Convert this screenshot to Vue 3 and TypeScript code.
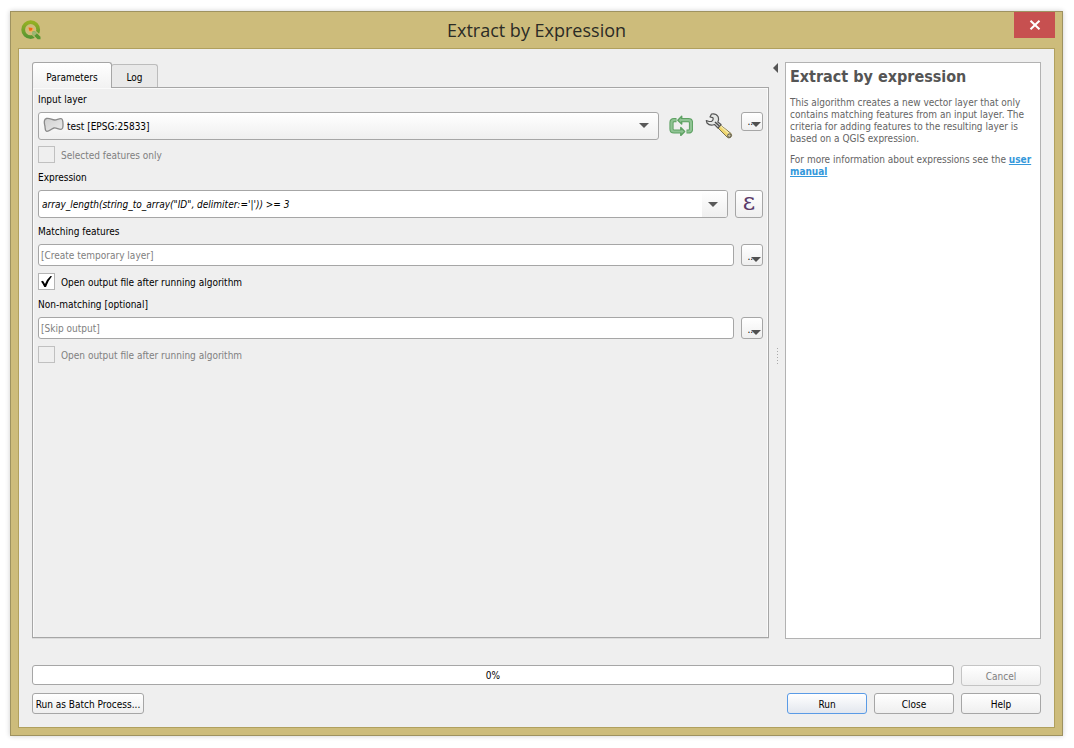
<script setup lang="ts">
import { ref } from 'vue'

const layer = ref('test [EPSG:25833]')
const selectedOnly = ref(false)
const expression = ref(`array_length(string_to_array("ID", delimiter:='|')) >= 3`)
const progress = ref(0)

interface Output {
  id: string
  label: string
  hint: string
  open: boolean
  disabled: boolean
}

const outputs = ref<Output[]>([
  { id: 'matching', label: 'Matching features', hint: '[Create temporary layer]', open: true, disabled: false },
  { id: 'failing', label: 'Non-matching [optional]', hint: '[Skip output]', open: false, disabled: true },
])
</script>

<template>
  <div class="window">
    <header class="titlebar">
      <svg class="logo" viewBox="0 0 20 20" aria-hidden="true">
        <defs>
          <linearGradient id="ring" x1="0" y1="0" x2="0" y2="1">
            <stop offset="0" stop-color="#93b023" />
            <stop offset="1" stop-color="#589632" />
          </linearGradient>
        </defs>
        <circle cx="9.700" cy="9.700" r="7.500" fill="none" stroke="url(#ring)" stroke-width="3.800" />
        <path d="M9.500 13.500L13.500 9.500L19.800 15.500V19.800H15.500Z" fill="#cdbc7b" />
        <path d="M11 11.500L13.500 11L19.500 16.700V19.200H16.700L11 13.700Z" fill="#589632" />
        <path d="M11 11.500L13.500 11L16 13.400L13.300 15.900L11 13.700Z" fill="#9cb873" />
        <path d="M7.500 7.500L12.300 8L12.600 10.500L10.800 12L8 11.500Z" fill="#f3b05a" />
        <path d="M7.500 7.500L11.500 7.900L11 10.300L8.500 11Z" fill="#ee6913" />
      </svg>
      <h1>Extract by Expression</h1>
      <button class="close" type="button" aria-label="Close window">
        <svg viewBox="0 0 12 10" aria-hidden="true">
          <path d="M1.500 .7L10.500 9.300M10.500 .7L1.500 9.300" stroke="#fff" stroke-width="2" />
        </svg>
      </button>
    </header>

    <main class="client">
      <div class="columns">
        <section class="left">
          <div class="tabs" role="tablist">
            <button class="tab active" type="button" role="tab" aria-selected="true">Parameters</button>
            <button class="tab" type="button" role="tab" aria-selected="false">Log</button>
          </div>
          <div class="panel" role="tabpanel">
            <label class="caption" for="layer">Input layer</label>
            <div class="row layer-row">
              <div class="layer-box">
                <select id="layer" v-model="layer">
                  <option>test [EPSG:25833]</option>
                </select>
                <svg class="polygon" viewBox="0 0 21 16" aria-hidden="true">
                  <defs>
                    <linearGradient id="poly" x1="0" y1="0" x2="1" y2="1">
                      <stop offset="0" stop-color="#cfcfcf" />
                      <stop offset="1" stop-color="#ececec" />
                    </linearGradient>
                  </defs>
                  <path d="M3.500 1.500C7 .8 9 3.200 12 3C14 2.800 16 1.500 18 1.700C20 2 20 4.500 20 7C20 10 20.300 11.500 18.500 12.200C16 12.800 13.500 10.500 11 11C8 11.800 6.500 14.500 3.800 14.300C1.500 14 2.500 10.500 1.700 8C1 5 1 2 3.500 1.500Z" fill="url(#poly)" stroke="#8a8a8a" stroke-width="1.300" />
                </svg>
                <svg class="arrow" viewBox="0 0 10 5" aria-hidden="true"><path d="M0 0H10L5 5Z" /></svg>
              </div>
              <button class="tool" type="button" aria-label="Iterate over this layer">
                <svg class="iterate" viewBox="0 0 24 22" aria-hidden="true">
                  <g fill="none" stroke-linejoin="round">
                    <path d="M7.500 5.200H5Q2.500 5.200 2.500 7.700V14Q2.500 16.500 5 16.500H12M12 5.200H19.500Q22 5.200 22 7.700V14Q22 16.500 19.500 16.500H17.500" stroke="#5da162" stroke-width="4.200" />
                    <path d="M8.800 5.200L12.700 1.300V9.100ZM15.700 16.500L11.800 12.600V20.400Z" fill="#8fc393" stroke="#5da162" stroke-width="1.400" />
                    <path d="M6.800 5.200H5Q2.500 5.200 2.500 7.700V14Q2.500 16.500 5 16.500H13M11.500 5.200H19.500Q22 5.200 22 7.700V14Q22 16.500 19.500 16.500H18.200" stroke="#8fc393" stroke-width="2.200" />
                  </g>
                </svg>
              </button>
              <button class="tool" type="button" aria-label="Advanced options">
                <svg class="wrench" viewBox="0 0 28 26" aria-hidden="true">
                  <path d="M13.500 10.500L26 20.500Q27.500 22.500 25.500 24.500Q23.500 25.500 22 24L11.500 13.500Z" fill="#efd66f" stroke="#77704e" />
                  <path d="M15 12.500L24 20.500" stroke="#f8eaa6" stroke-width="1.500" />
                  <circle cx="24.300" cy="22.600" r="1.700" fill="#d0c8a0" stroke="#555" />
                  <path d="M6.500 1Q11 .2 13 3.500Q14.200 6.500 12.800 9L16 11.500L13 15L9.500 11.500Q5 13.500 2 10L1.300 7.600L3.600 8.300L6.500 8.500Q9 7 7.800 4.600L5 4Z" fill="#e5e7e5" stroke="#555" stroke-width="1.200" stroke-linejoin="round" />
                  <path d="M10 9L14 12.700" stroke="#4c4c4c" stroke-width="1.500" />
                </svg>
              </button>
              <button class="more short" type="button" aria-label="Source options">
                <span>...</span>
                <svg viewBox="0 0 10 5" aria-hidden="true"><path d="M0 0H10L5 5Z" /></svg>
              </button>
            </div>
            <label class="check off">
              <input v-model="selectedOnly" type="checkbox" disabled />
              <span>Selected features only</span>
            </label>

            <label class="caption" for="expression">Expression</label>
            <div class="row">
              <div class="combo">
                <input id="expression" v-model="expression" type="text" spellcheck="false" />
                <button type="button" aria-label="Recent expressions">
                  <svg viewBox="0 0 10 5" aria-hidden="true"><path d="M0 0H10L5 5Z" /></svg>
                </button>
              </div>
              <button class="epsilon" type="button" aria-label="Expression builder">ε</button>
            </div>

            <template v-for="output in outputs" :key="output.id">
              <label class="caption" :for="output.id">{{ output.label }}</label>
              <div class="row output-row">
                <input :id="output.id" class="path" type="text" :placeholder="output.hint" />
                <button class="more" type="button" :aria-label="`${output.label} options`">
                  <span>...</span>
                  <svg viewBox="0 0 10 5" aria-hidden="true"><path d="M0 0H10L5 5Z" /></svg>
                </button>
              </div>
              <label class="check" :class="{ off: output.disabled }">
                <input v-model="output.open" type="checkbox" :disabled="output.disabled" />
                <svg v-if="output.open" class="tick" viewBox="0 0 17 17" aria-hidden="true">
                  <path d="M3 8.500L5 7.800L7 11Q9 6 12.500 3L14 3.300Q10 8 8 14H6.300Q5 11 3 8.500Z" />
                </svg>
                <span>Open output file after running algorithm</span>
              </label>
            </template>
          </div>
        </section>

        <div class="splitter">
          <button type="button" aria-label="Collapse help">
            <svg viewBox="0 0 5 10" aria-hidden="true"><path d="M5 0V10L0 5Z" /></svg>
          </button>
          <span class="grip"></span>
        </div>

        <aside class="help">
          <h2>Extract by expression</h2>
          <p>This algorithm creates a new vector layer that only contains matching features from an input layer. The criteria for adding features to the resulting layer is based on a QGIS expression.</p>
          <p>For more information about expressions see the <a href="#">user manual</a></p>
        </aside>
      </div>

      <div class="row progress-row">
        <div class="progress" role="progressbar" aria-label="Progress" :aria-valuenow="progress">{{ progress }}%</div>
        <button class="push" type="button" disabled>Cancel</button>
      </div>
      <div class="row actions">
        <button class="push batch" type="button">Run as Batch Process...</button>
        <button class="push primary" type="button">Run</button>
        <button class="push" type="button">Close</button>
        <button class="push" type="button">Help</button>
      </div>
    </main>
  </div>
</template>

<style>
body {
  margin: 0;
  background: #fff;
}

#app {
  box-sizing: border-box;
  display: flex;
  min-height: 100vh;
  padding: 11px 11px 12px 10px;
}
</style>

<style scoped>
* {
  box-sizing: border-box;
}

button,
input,
select {
  margin: 0;
  padding: 0;
  font: inherit;
  color: inherit;
}

.window {
  flex: 1;
  display: flex;
  flex-direction: column;
  min-width: 0;
  padding: 0 7px 7px;
  border: 1px solid #9e9260;
  background: #cdbc7b;
  box-shadow: 0 0 5px rgba(0, 0, 0, 0.2);
  font: 10px/14px "DejaVu Sans Condensed", "DejaVu Sans", sans-serif;
  color: #000;
}

.titlebar {
  display: grid;
  grid-template-columns: 41px 1fr 41px;
  height: 36px;
}

.logo {
  width: 20px;
  height: 20px;
  margin: 8px 0 0 3px;
}

h1 {
  margin: 0;
  font: 400 18px/36px "Open Sans", "Noto Sans", sans-serif;
  text-align: center;
  color: #2b2b26;
}

.close {
  display: flex;
  align-items: center;
  justify-content: center;
  height: 26px;
  border: 0;
  background: #c75050;
}

.close svg {
  width: 12px;
  height: 10px;
}

.client {
  flex: 1;
  display: flex;
  flex-direction: column;
  padding: 13px;
  border: 1px solid #b0a05e;
  background: #efefef;
}

.columns {
  flex: 1;
  display: flex;
}

.left {
  flex: 1;
  display: flex;
  flex-direction: column;
  min-width: 0;
  padding-bottom: 1px;
}

.tabs {
  display: flex;
  align-items: flex-end;
  height: 26px;
  margin-bottom: -1px;
}

.tab {
  width: 47px;
  height: 24px;
  margin-left: -1px;
  padding-top: 4px;
  border: 1px solid #bcbcbc;
  border-bottom-color: #a6a6a6;
  border-radius: 3px 3px 0 0;
  background: #e9e9e9;
}

.tab.active {
  width: 80px;
  height: 26px;
  margin: 0;
  border-color: #a6a6a6;
  border-bottom: 0;
  background: linear-gradient(#fff, #f2f2f2);
  z-index: 1;
}

.panel {
  flex: 1;
  display: flex;
  flex-direction: column;
  padding: 5px;
  border: 1px solid #a6a6a6;
  box-shadow: inset 1px 1px #fafafa, inset -1px 0 #fafafa, 0 1px #dcdcdc;
}

.row {
  display: flex;
  gap: 7px;
}

.caption {
  margin-bottom: 5px;
}

.check + .caption {
  margin-top: 8px;
}

.row + .caption {
  margin-top: 7px;
}

.layer-row {
  gap: 8px;
  align-items: flex-start;
}

.layer-box {
  position: relative;
  flex: 1;
}

.layer-box select {
  display: block;
  width: 100%;
  height: 28px;
  padding: 2px 0 0 28px;
  appearance: none;
  border: 1px solid #a6a6a6;
  border-radius: 3px;
  background: linear-gradient(#fff, #efefef);
}

.polygon {
  position: absolute;
  left: 5px;
  top: 5px;
  width: 21px;
  height: 16px;
  pointer-events: none;
}

.arrow {
  position: absolute;
  right: 10px;
  top: 11px;
  width: 10px;
  height: 5px;
  fill: #595959;
  pointer-events: none;
}

.tool {
  display: flex;
  align-items: center;
  justify-content: center;
  width: 29px;
  height: 28px;
  border: 0;
  background: none;
}

.iterate {
  width: 24px;
  height: 22px;
  margin-right: 1px;
}

.wrench {
  width: 28px;
  height: 26px;
}

.more {
  display: flex;
  align-items: flex-end;
  justify-content: flex-end;
  width: 22px;
  height: 22px;
  padding: 0 1px 3px 0;
  border: 1px solid #a6a6a6;
  border-radius: 3px;
  background: linear-gradient(#fff, #efefef);
}

.more.short {
  height: 19px;
}

.more span {
  line-height: 10px;
}

.more svg {
  width: 10px;
  height: 5px;
  margin-left: -5px;
  fill: #505050;
}

.check {
  display: flex;
  position: relative;
  align-items: center;
  gap: 6px;
  height: 17px;
  margin-top: 6px;
}

.output-row + .check {
  margin-top: 7px;
}

.check input {
  width: 17px;
  height: 17px;
  appearance: none;
  border: 1px solid #b4b4b4;
  background: #fff;
}

.check.off {
  color: #808080;
}

.check.off input {
  border-color: #c0c0c0;
  background: #efefef;
}

.check span {
  padding-top: 2px;
}

.tick {
  position: absolute;
  left: 0;
  top: 0;
  width: 17px;
  height: 17px;
}

.combo {
  flex: 1;
  display: flex;
  height: 28px;
  overflow: hidden;
  border: 1px solid #a6a6a6;
  border-radius: 3px;
  background: #fff;
}

.combo input {
  flex: 1;
  min-width: 0;
  padding: 2px 0 0 3px;
  border: 0;
  background: none;
  font-style: italic;
}

.combo button {
  display: flex;
  align-items: center;
  justify-content: center;
  width: 25px;
  padding-right: 4px;
  border: 0;
  background: linear-gradient(#fff, #efefef);
}

.combo svg {
  width: 10px;
  height: 5px;
  fill: #595959;
}

.epsilon {
  width: 28px;
  height: 28px;
  padding-bottom: 4px;
  border: 1px solid #a6a6a6;
  border-radius: 3px;
  background: linear-gradient(#fff, #efefef);
  font: 24px/22px "DejaVu Serif", serif;
  color: #5b3a68;
}

.path {
  flex: 1;
  min-width: 0;
  height: 22px;
  padding: 1px 2px 0;
  border: 1px solid #a6a6a6;
  border-radius: 3px;
  background: #fff;
}

.path::placeholder {
  color: #808080;
  opacity: 1;
}

.splitter {
  display: flex;
  flex-direction: column;
  align-items: center;
  width: 16px;
}

.splitter button {
  display: flex;
  justify-content: center;
  width: 10px;
  padding: 1px 4px 0 0;
  border: 0;
  background: none;
}

.splitter svg {
  width: 5px;
  height: 10px;
  fill: #555;
}

.grip {
  width: 1px;
  height: 17px;
  margin: auto 0;
  background: repeating-linear-gradient(#aaa 0 1px, transparent 1px 3px);
}

.help {
  width: 256px;
  padding: 4px;
  border: 1px solid #b2b2b2;
  background: #fff;
  line-height: 12px;
  color: #646464;
}

h2 {
  margin: 0 0 10px;
  font-size: 16px;
  line-height: 20px;
  color: #555;
}

p {
  margin: 0 0 9px;
}

a {
  font-weight: 700;
  color: #3498db;
}

.progress-row {
  margin-top: 26px;
}

.progress {
  flex: 1;
  height: 20px;
  border: 1px solid #a6a6a6;
  border-radius: 3px;
  background: #fff;
  line-height: 20px;
  text-align: center;
}

.push {
  width: 80px;
  height: 21px;
  padding-top: 2px;
  border: 1px solid #a6a6a6;
  border-radius: 3px;
  background: linear-gradient(#fff, #efefef);
}

.push:disabled {
  border-color: #c4c4c4;
  color: #808080;
}

.actions {
  margin-top: 7px;
}

.batch {
  width: 112px;
  margin-right: auto;
}

.primary {
  border-color: #5a9be6;
  background: linear-gradient(#fff, #e3e7ee);
}
</style>
